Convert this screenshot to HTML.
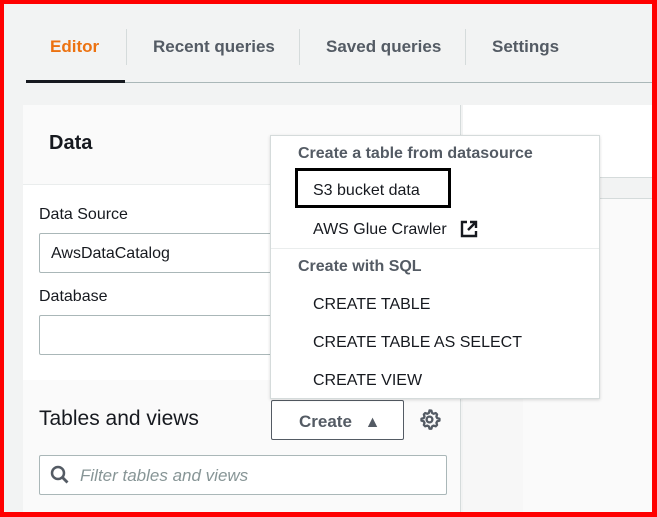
<!DOCTYPE html>
<html><head><style>
*{box-sizing:border-box;margin:0;padding:0}
body{width:657px;height:517px;overflow:hidden;background:#f2f3f3;font-family:"Liberation Sans",sans-serif;position:relative;color:#16191f}
.a{position:absolute}
.tab{position:absolute;top:37px;font-size:17px;font-weight:bold;color:#545b64}
.sep{position:absolute;top:29px;width:1px;height:36px;background:#d5dbdb}
.mi{position:absolute;left:313px;font-size:16px;color:#16191f}
.mh{position:absolute;left:298px;font-size:16px;font-weight:bold;color:#545b64}
</style></head><body>
<div class="tab" style="left:50px;color:#ec7211">Editor</div>
<div class="sep" style="left:126px"></div>
<div class="tab" style="left:153px">Recent queries</div>
<div class="sep" style="left:299px"></div>
<div class="tab" style="left:326px">Saved queries</div>
<div class="sep" style="left:465px"></div>
<div class="tab" style="left:492px">Settings</div>
<div class="a" style="left:26px;top:82px;width:630px;height:1px;background:#aab7b8"></div>
<div class="a" style="left:26px;top:80px;width:99px;height:3px;background:#16191f"></div>

<div class="a" style="left:23px;top:105px;width:438px;height:410px;background:#fff;border-right:2px solid #d5dbdb"></div>
<div class="a" style="left:23px;top:105px;width:437px;height:80px;background:#fafafa;border-bottom:1px solid #eaeded"></div>
<div class="a" style="left:49px;top:132px;font-size:20px;font-weight:bold">Data</div>
<div class="a" style="left:39px;top:206px;font-size:16px">Data Source</div>
<div class="a" style="left:39px;top:233px;width:300px;height:40px;border:1px solid #aab7b8;border-radius:2px;padding:11px 11px;font-size:16px">AwsDataCatalog</div>
<div class="a" style="left:39px;top:288px;font-size:16px">Database</div>
<div class="a" style="left:39px;top:315px;width:300px;height:40px;border:1px solid #aab7b8;border-radius:2px"></div>
<div class="a" style="left:23px;top:380px;width:437px;height:135px;background:#fafafa"></div>
<div class="a" style="left:39px;top:407px;font-size:21px">Tables and views</div>
<div class="a" style="left:271px;top:400px;width:133px;height:40px;border:1px solid #545b64;border-radius:2px;background:#fff;font-size:17px;font-weight:bold;color:#545b64;padding:11px 0 0 27px">Create <span style="font-size:16px;margin-left:8px">▲</span></div>
<svg class="a" style="left:418px;top:408px" width="23" height="23" viewBox="0 0 24 24"><path d="M12 2.5l2 .3.6 2.3 1.6.9 2.3-.7 1.4 1.4-.7 2.3.9 1.6 2.3.6v2l-2.3.6-.9 1.6.7 2.3-1.4 1.4-2.3-.7-1.6.9-.6 2.3h-2l-.6-2.3-1.6-.9-2.3.7-1.4-1.4.7-2.3-.9-1.6-2.3-.6v-2l2.3-.6.9-1.6-.7-2.3 1.4-1.4 2.3.7 1.6-.9.6-2.3z" fill="none" stroke="#545b64" stroke-width="2.4" stroke-linejoin="round"/><circle cx="12" cy="12" r="3" fill="none" stroke="#545b64" stroke-width="2.4"/></svg>
<div class="a" style="left:39px;top:455px;width:408px;height:40px;border:1px solid #aab7b8;border-radius:2px;background:#fff"></div>
<svg class="a" style="left:49px;top:464px" width="22" height="22" viewBox="0 0 22 22"><circle cx="9" cy="9" r="6" fill="none" stroke="#545b64" stroke-width="2.5"/><path d="M13.5 13.5l5 5" stroke="#545b64" stroke-width="2.8"/></svg>
<div class="a" style="left:80px;top:466px;font-size:17px;font-style:italic;color:#879596">Filter tables and views</div>

<div class="a" style="left:463px;top:105px;width:190px;height:72px;background:#fff"></div>
<div class="a" style="left:463px;top:177px;width:190px;height:22px;background:#f2f3f3;border-top:1px solid #d5dbdb;border-bottom:1px solid #d5dbdb"></div>
<div class="a" style="left:463px;top:199px;width:60px;height:313px;background:#f7f7f7"></div>
<div class="a" style="left:523px;top:199px;width:130px;height:313px;background:#fafafa"></div>

<div class="a" style="left:270px;top:135px;width:330px;height:264px;background:#fff;border:1px solid #d5dbdb;box-shadow:0 1px 3px rgba(0,0,0,.15)"></div>
<div class="a" style="left:271px;top:248px;width:328px;height:1px;background:#eaeded"></div>
<div class="mh" style="top:145px">Create a table from datasource</div>
<div class="a" style="left:295px;top:168px;width:156px;height:40px;border:3px solid #000"></div>
<div class="mi" style="top:182px">S3 bucket data</div>
<div class="mi" style="top:221px">AWS Glue Crawler</div>
<svg class="a" style="left:459px;top:219px" width="20" height="20" viewBox="0 0 20 20"><path d="M8 3H3v14h14v-5" fill="none" stroke="#16191f" stroke-width="2.4"/><path d="M11 3h6v6M17 3l-8 8" fill="none" stroke="#16191f" stroke-width="2.4"/></svg>
<div class="mh" style="top:258px">Create with SQL</div>
<div class="mi" style="top:296px">CREATE TABLE</div>
<div class="mi" style="top:334px">CREATE TABLE AS SELECT</div>
<div class="mi" style="top:372px">CREATE VIEW</div>

<div class="a" style="left:0;top:0;width:657px;height:517px;border-style:solid;border-color:#ff0000;border-width:4px 5px 5px 4px"></div>
</body></html>
